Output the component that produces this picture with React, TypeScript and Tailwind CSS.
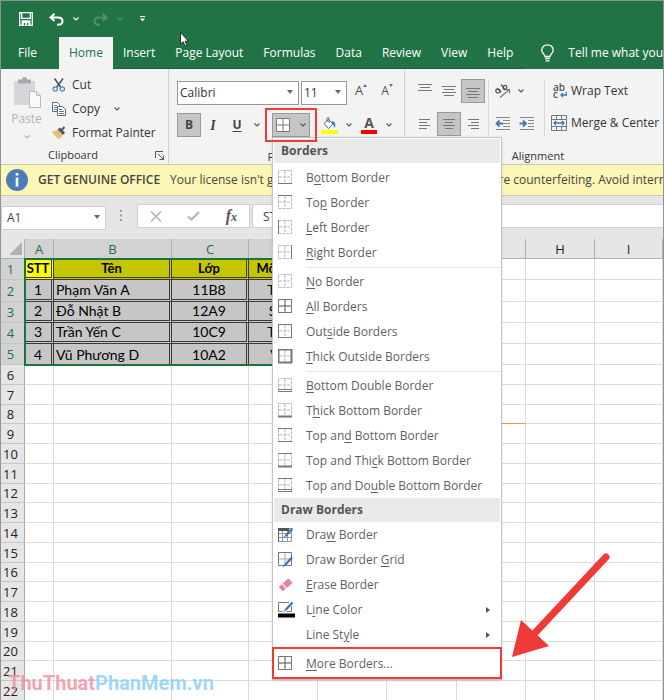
import React from "react";

const UI = "font-['Open_Sans','Noto_Sans',sans-serif]";

/* ---------- small shared pieces ---------- */

function Chevron({ className = "text-[#555]" }: { className?: string }) {
  return (
    <svg width="6" height="4" viewBox="0 0 6 4" fill="none" stroke="currentColor" strokeWidth="1.1" className={className}>
      <path d="M0.5 0.5 3 3 5.5 0.5" />
    </svg>
  );
}

function DropArrow() {
  return (
    <svg width="6" height="4" viewBox="0 0 6 4" className="pointer-events-none absolute top-1/2 right-1.5 -mt-0.5 fill-[#666]">
      <path d="M0 0h6L3 4z" />
    </svg>
  );
}

function IconButton({
  label,
  on = false,
  width = "w-6",
  disabled = false,
  children,
}: {
  label: string;
  on?: boolean;
  width?: string;
  disabled?: boolean;
  children: React.ReactNode;
}) {
  return (
    <button
      type="button"
      aria-label={label}
      disabled={disabled}
      className={`flex h-6 shrink-0 items-center justify-center ${width} ${on ? "border border-[#999] bg-[#c5c5c5]" : ""}`}
    >
      {children}
    </button>
  );
}

/* ---------- title bar and tabs ---------- */

function TitleBar() {
  return (
    <div className="flex h-9 items-center bg-[#217346] pl-[18px] text-white">
      <button type="button" aria-label="Save" className="mr-4">
        <svg width="14" height="14" viewBox="0 0 14 14" fill="none" stroke="currentColor" strokeWidth="1.3">
          <path d="M.7.7h12.6v12.6H.7zM2.7.9v5.4h8.6V.9" />
          <path d="M3.2 13V9h7.6v4z" fill="currentColor" />
          <path d="M5.5 13.4V11M8.6 13.4V11" stroke="#217346" />
        </svg>
      </button>
      <button type="button" aria-label="Undo" className="mr-[9px]">
        <svg width="15" height="13" viewBox="0 0 15 13" fill="none" stroke="currentColor" strokeWidth="2">
          <path d="M5.5.7 1.5 4.4l4 3.7M2 4.4h7.2c2.700 0 4.300 1.500 4.300 3.600s-1.600 3.800-4.200 3.800H8" />
        </svg>
      </button>
      <button type="button" aria-label="Undo history" className="mr-3.5">
        <Chevron className="text-white" />
      </button>
      <button type="button" aria-label="Redo" disabled className="mr-[9px] text-[#4f9069]">
        <svg width="15" height="13" viewBox="0 0 15 13" fill="none" stroke="currentColor" strokeWidth="2">
          <path d="M9.500.7l4 3.700-4 3.700M13 4.400H5.800c-2.700 0-4.300 1.500-4.300 3.600s1.600 3.800 4.200 3.800H7" />
        </svg>
      </button>
      <button type="button" aria-label="Redo history" disabled className="mr-[17px]">
        <Chevron className="text-[#4f9069]" />
      </button>
      <button type="button" aria-label="Customize Quick Access Toolbar">
        <svg width="5" height="6" viewBox="0 0 5 6" fill="currentColor">
          <path d="M0 0h5v1H0zM0 2.500h5L2.500 5.500z" />
        </svg>
      </button>
    </div>
  );
}

const TABS = ["Home", "Insert", "Page Layout", "Formulas", "Data", "Review", "View", "Help"];

function Tabs() {
  return (
    <nav className="flex h-8 overflow-hidden bg-[#217346] pl-[7px] text-[12px] whitespace-nowrap text-white">
      <button type="button" className="mr-3 px-2.5">
        File
      </button>
      {TABS.map((t) => (
        <button
          key={t}
          type="button"
          className={`px-2.5 ${t === "Home" ? "bg-[#f3f3f3] text-[#217346]" : "border-b border-[#1a5c38]"}`}
        >
          {t}
        </button>
      ))}
      <button type="button" className="ml-[18px] flex items-center gap-3.5">
        <svg width="13" height="18" viewBox="0 0 13 18" fill="none" stroke="currentColor" strokeWidth="1.3">
          <path d="M4 12.500c0-2-3.200-3.200-3.200-6.400C.8 3 3.300.8 6.500.8s5.700 2.200 5.700 5.300c0 3.200-3.200 4.400-3.200 6.400zM4 14.500h5M4.500 16.800h4" />
        </svg>
        Tell me what you want to do
      </button>
    </nav>
  );
}

/* ---------- ribbon ---------- */

function Launcher() {
  return (
    <button type="button" aria-label="More settings" className="text-[#555]">
      <svg width="9" height="9" viewBox="0 0 9 9" fill="none" stroke="currentColor">
        <path d="M.5 7V.5H8M3 3l5 5M8.500 4.500v4h-4" />
      </svg>
    </button>
  );
}

function Clipboard() {
  const row = "flex h-6 items-center text-[12px] whitespace-nowrap";
  return (
    <section className="flex w-[168px] shrink-0 flex-col border-r border-[#d0d0d0] pt-1">
      <div className="flex">
        <button type="button" disabled className="flex w-[51px] flex-col items-center pt-1 text-[12px] text-[#b2b2b2]">
          <svg width="30" height="32" viewBox="0 0 30 32" fill="none">
            <path d="M2 4h21v24H2z" fill="#d8d5da" />
            <path d="M6 2.500h4a2.500 2.500 0 0 1 5 0h4V6.500H6z" fill="#a9a9ab" />
            <path d="M17.500 14.500h7l4 4v12h-11z" fill="#faf8fb" stroke="#bdb9bf" />
            <path d="M24.500 14.500v4h4" stroke="#bdb9bf" />
          </svg>
          <span className="mt-0.5 leading-4">Paste</span>
          <Chevron className="mt-2 text-[#b2b2b2]" />
        </button>
        <div className="flex flex-col">
          <button type="button" className={row}>
            <svg width="14" height="14" viewBox="0 0 14 14" fill="none" className="mr-[6px]">
              <path d="M2.500.5 9 9.500M11 .5 4.500 9.500" stroke="#555" strokeWidth="1.600" />
              <circle cx="3.200" cy="11" r="2.200" stroke="#4a86c0" strokeWidth="1.200" />
              <circle cx="10.300" cy="11" r="2.200" stroke="#4a86c0" strokeWidth="1.200" />
            </svg>
            Cut
          </button>
          <button type="button" className={row}>
            <svg width="14" height="14" viewBox="0 0 14 14" fill="none" stroke="#666" className="mr-[6px]">
              <path d="M.5.5h5l2 2v7h-7z" fill="#fff" />
              <path d="M2 3.500h3M2 5.500h3M2 7.500h3" stroke="#4a86c0" />
              <path d="M5.500 4.500h5l3 3v6h-8z" fill="#fff" />
              <path d="M7 7.500h3M7 9.500h5M7 11.500h5" stroke="#4a86c0" />
            </svg>
            Copy
            <Chevron className="ml-3.5 text-[#555]" />
          </button>
          <button type="button" className={row}>
            <svg width="14" height="14" viewBox="0 0 14 14" className="mr-[6px]">
              <path d="M0 5.500 6 4l5 5-3.500 4.500C5 12.500 1.500 9 0 5.500z" fill="#eabf7d" />
              <path d="M5.500 3.500 8 1.500l5 5-2 2.500z" fill="#5a5a5a" />
              <path d="M9.500 4 12.500 1" stroke="#5a5a5a" strokeWidth="2.200" />
            </svg>
            Format Painter
          </button>
        </div>
      </div>
      <div className="mt-0.5 flex h-4 items-center pr-1">
        <span className="flex-1 pr-4 pl-1.5 text-center text-[11px]">Clipboard</span>
        <Launcher />
      </div>
    </section>
  );
}

type Edges = { t?: number; b?: number; l?: number; r?: number; inner?: boolean; double?: boolean };

function BorderIcon({ t = 0, b = 0, l = 0, r = 0, inner = false, double = false }: Edges) {
  return (
    <svg width="15" height="15" viewBox="0 0 15 15" fill="none" stroke="#777">
      <path d="M.5.500h13v13H.5zM7 1v12M1 7h12" stroke="#b8b8b8" strokeDasharray="3 1" />
      {inner && <path d="M7 1v12M1 7h12" stroke="#666" />}
      {t > 0 && <path d="M0 .5h14" strokeWidth={t} />}
      {b > 0 && <path d="M0 13.500h14" strokeWidth={b} />}
      {l > 0 && <path d="M.5 0v14" strokeWidth={l} />}
      {r > 0 && <path d="M13.500 0v14" strokeWidth={r} />}
      {double && <path d="M0 11.500h14" />}
    </svg>
  );
}

const ALL: Edges = { t: 1, b: 1, l: 1, r: 1, inner: true };

/* An asterisk stands before the access key of each label. */
const GROUPS: { label: string; edges: Edges }[][] = [
  [
    { label: "B*ottom Border", edges: { b: 1 } },
    { label: "To*p Border", edges: { t: 1 } },
    { label: "*Left Border", edges: { l: 1 } },
    { label: "*Right Border", edges: { r: 1 } },
  ],
  [
    { label: "*No Border", edges: {} },
    { label: "*All Borders", edges: ALL },
    { label: "Out*side Borders", edges: { t: 1, b: 1, l: 1, r: 1 } },
    { label: "*Thick Outside Borders", edges: { t: 2, b: 2, l: 2, r: 2 } },
  ],
  [
    { label: "*Bottom Double Border", edges: { b: 1, double: true } },
    { label: "T*hick Bottom Border", edges: { b: 2 } },
    { label: "Top an*d Bottom Border", edges: { t: 1, b: 1 } },
    { label: "Top and Thi*ck Bottom Border", edges: { t: 1, b: 2 } },
    { label: "Top and Do*uble Bottom Border", edges: { t: 1, b: 1, double: true } },
  ],
];

function MenuItem({ label, icon, submenu = false }: { label: string; icon?: React.ReactNode; submenu?: boolean }) {
  const [before, rest] = label.split("*");
  return (
    <button type="button" role="menuitem" className="flex h-[25px] w-full items-center pl-1 text-left whitespace-nowrap">
      <span className="flex w-7 shrink-0">{icon}</span>
      <span className="flex-1">
        {before}
        <u className="underline-offset-2">{rest[0]}</u>
        {rest.slice(1)}
      </span>
      {submenu && (
        <svg width="4" height="6" viewBox="0 0 4 6" className="mr-[10px] fill-[#555]">
          <path d="M0 0v6l4-3z" />
        </svg>
      )}
    </button>
  );
}

function MenuTitle({ children }: { children: React.ReactNode }) {
  return <div className="flex h-6 items-center bg-[#eaeaea] pl-[7px] font-bold text-[#555]">{children}</div>;
}

function Pencil() {
  return (
    <>
      <path d="M14.500 1.500 7.500 9" stroke="#3d78b8" strokeWidth="2.400" />
      <path d="M5 11.500 7.800 9.800 6.800 8.700z" fill="#3d78b8" stroke="none" />
    </>
  );
}

function BordersMenu() {
  return (
    <div
      role="menu"
      className="absolute top-full left-[7px] z-10 w-[230px] border border-[#c4c4c4] bg-white pt-px text-[12px] text-[#5f5f5f] shadow-sm"
    >
      <div className="px-px">
        <MenuTitle>Borders</MenuTitle>
        <div className="pt-0.5">
          {GROUPS.map((items, i) => (
            <div key={i}>
              {i > 0 && <hr className="mt-0.5 mb-px ml-8 border-[#e2e2e2]" />}
              {items.map((it) => (
                <MenuItem key={it.label} label={it.label} icon={<BorderIcon {...it.edges} />} />
              ))}
            </div>
          ))}
        </div>
        <MenuTitle>Draw Borders</MenuTitle>
        <MenuItem
          label="Dra*w Border"
          icon={
            <svg width="17" height="16" viewBox="0 0 17 16" fill="none" stroke="#999">
              <path d="M.5 1.500h13v13H.5zM.5 6.500h13M.5 10.500h13M4.500 2v12M9.500 2v12" />
              <path d="M0 2.500h11" stroke="#555" strokeWidth="3" />
              <path d="M.5 2v13" stroke="#666" />
              <Pencil />
            </svg>
          }
        />
        <MenuItem
          label="Draw Border *Grid"
          icon={
            <svg width="17" height="16" viewBox="0 0 17 16" fill="none" stroke="#777">
              <path d="M.5.500h13v13H.5z" />
              <path d="M7 1v12M1 7h12" stroke="#aaa" />
              <path d="M14 5.500 7 13" stroke="#3d78b8" strokeWidth="2.400" />
              <path d="M4.500 15.500 7.500 13.800 6.300 12.500z" fill="#3d78b8" stroke="none" />
            </svg>
          }
        />
        <MenuItem
          label="*Erase Border"
          icon={
            <svg width="15" height="14" viewBox="0 0 15 14" fill="#e58496">
              <path d="M9.500 1h1.500L14 4v1.500L8.500 10 4.800 5.500zM4 6.200 7.700 10.700 5.500 12.700H4L1.200 9.500V8.200z" />
            </svg>
          }
        />
        <MenuItem
          label="L*ine Color"
          icon={
            <svg width="17" height="17" viewBox="0 0 17 17" fill="none" stroke="#777">
              <path d="M11 1.500H.5v9h4M13.500 5v5.500H9" />
              <Pencil />
              <path d="M0 12.500h17v4H0z" fill="#000" stroke="none" />
            </svg>
          }
          submenu
        />
        <MenuItem label="Line St*yle" submenu />
      </div>
      <div className="-mx-px border-2 border-[#f03a38] pt-0.5 pb-px">
        <MenuItem label="*More Borders..." icon={<BorderIcon {...ALL} />} />
      </div>
    </div>
  );
}

function FontGroup() {
  return (
    <section className="flex w-[236px] shrink-0 flex-col border-r border-[#d0d0d0] pt-2.5 pl-2">
      <div className="flex gap-0.5">
        <div className="relative w-[122px]">
          <select aria-label="Font" className="h-6 w-full appearance-none border border-[#999] bg-white pl-0.5 text-[12px]">
            <option>Calibri</option>
          </select>
          <DropArrow />
        </div>
        <div className="relative w-[46px]">
          <select aria-label="Font size" className="h-6 w-full appearance-none border border-[#999] bg-white pl-0.5 text-[12px]">
            <option>11</option>
          </select>
          <DropArrow />
        </div>
        <IconButton label="Increase font size">
          <span className="text-[13px] text-[#555]">A</span>
          <svg width="4" height="3" viewBox="0 0 4 3" className="mb-3 fill-[#3d78b8]">
            <path d="M0 3h4L2 0z" />
          </svg>
        </IconButton>
        <IconButton label="Decrease font size">
          <span className="text-[12px] text-[#555]">A</span>
          <svg width="4" height="3" viewBox="0 0 4 3" className="mb-3 fill-[#3d78b8]">
            <path d="M0 0h4L2 3z" />
          </svg>
        </IconButton>
      </div>
      <div className="mt-2 flex">
        <IconButton label="Bold" on>
          <b className="text-[12px] text-[#444]">B</b>
        </IconButton>
        <IconButton label="Italic">
          <b className="font-['Liberation_Serif',serif] text-[14px] text-[#444] italic">I</b>
        </IconButton>
        <IconButton label="Underline">
          <b className="text-[12px] text-[#444] underline underline-offset-2">U</b>
        </IconButton>
        <IconButton label="Underline options" width="w-4">
          <Chevron />
        </IconButton>
        <div className="relative px-[7px]">
          <button
            type="button"
            aria-label="Borders"
            aria-expanded="true"
            className="flex h-6 w-[38px] items-center gap-2.5 border border-[#999] bg-[#c5c5c5] pl-[3px]"
          >
            <svg width="14" height="14" viewBox="0 0 14 14" fill="#fff" stroke="#777">
              <path d="M.5.500h13v13H.5zM7 1v12M1 7h12" />
            </svg>
            <Chevron />
          </button>
          <BordersMenu />
          <div className="pointer-events-none absolute inset-x-0 -inset-y-[5px] z-20 border-2 border-[#f03a38]" />
        </div>
        <IconButton label="Fill Color">
          <svg width="17" height="17" viewBox="0 0 17 17" fill="none">
            <path d="M3 6.500 7.500 2.500 12 7 7.500 11.500z" fill="#fff" stroke="#666" />
            <path d="M6 5V1.500c0-1.300 2-1.300 2 0V6" stroke="#666" />
            <path d="M10.500 4c3 0 4.500 2 3.500 7-1-1.500-1.500-3-2-4z" fill="#3d78b8" />
            <path d="M0 13h17v4H0z" fill="#ff0" />
          </svg>
        </IconButton>
        <IconButton label="Fill colors" width="w-4">
          <Chevron />
        </IconButton>
        <IconButton label="Font Color">
          <span className="w-4 border-b-4 border-[#f00] text-center text-[14px] leading-[14px] font-bold text-[#555]">A</span>
        </IconButton>
        <IconButton label="Font colors" width="w-4">
          <Chevron />
        </IconButton>
      </div>
      <div className="mt-3 flex h-4 items-center pr-1">
        <span className="flex-1 pr-2.5 text-center text-[11px]">Font</span>
        <Launcher />
      </div>
    </section>
  );
}

function Lines({ d, height = 12 }: { d: string; height?: number }) {
  return (
    <svg width="16" height={height} viewBox={`0 0 16 ${height}`} stroke="#777">
      <path d={d} />
    </svg>
  );
}

function Rule() {
  return <div className="mr-0.5 ml-[3px] h-[57px] w-px shrink-0 bg-[#d8d8d8]" />;
}

function Alignment() {
  return (
    <section className="flex min-w-0 flex-1 flex-col overflow-hidden pt-2.5 pl-2">
      <div className="flex">
        <div className="grid shrink-0 grid-cols-[24px_24px_24px] gap-y-2">
          <IconButton label="Top Align">
            <span className="mb-2">
              <Lines d="M1 .5h14M3 3.500h10M1 6.500h14" height={7} />
            </span>
          </IconButton>
          <IconButton label="Middle Align">
            <Lines d="M1 1.500h14M3 4.500h10M1 7.500h14M3 10.500h10" />
          </IconButton>
          <IconButton label="Bottom Align" on>
            <span className="mt-1">
              <Lines d="M1 1.500h14M3 4.500h10M1 7.500h14M3 10.500h10" />
            </span>
          </IconButton>
          <IconButton label="Align Left">
            <Lines d="M2 1.500h11M2 4.500h8M2 7.500h11M2 10.500h8" />
          </IconButton>
          <IconButton label="Center" on>
            <Lines d="M2 1.500h12M4 4.500h8M2 7.500h12M4 10.500h8" />
          </IconButton>
          <IconButton label="Align Right">
            <Lines d="M3 1.500h11M6 4.500h8M3 7.500h11M6 10.500h8" />
          </IconButton>
        </div>
        <Rule />
        <div className="grid shrink-0 grid-cols-[24px_24px] gap-y-2">
          <IconButton label="Orientation">
            <svg width="18" height="16" viewBox="0 0 18 16" fill="none" stroke="#555" strokeWidth="1.2">
              <ellipse cx="4" cy="8" rx="2.200" ry="1.800" />
              <path d="M3 5.200 7.200 9M7 1.500l4.500 5.500" />
              <ellipse cx="11" cy="4.500" rx="1.800" ry="2.200" />
              <path d="M6 14.500 15.500 6.500M11.500 6.500h4V10.500" stroke="#777" />
            </svg>
          </IconButton>
          <IconButton label="Orientation options" width="w-3">
            <Chevron />
          </IconButton>
          <IconButton label="Decrease Indent">
            <svg width="16" height="14" viewBox="0 0 16 14" fill="none" stroke="#888">
              <path d="M1 .5h14M8 3.500h7M8 6.500h7M8 9.500h7M1 12.500h14" />
              <path d="M4.500 3.500 1.500 6.500l3 3M1.500 6.500H8" stroke="#3d78b8" strokeWidth="1.800" />
            </svg>
          </IconButton>
          <IconButton label="Increase Indent">
            <svg width="16" height="14" viewBox="0 0 16 14" fill="none" stroke="#888">
              <path d="M1 .5h14M9 3.500h6M9 6.500h6M9 9.500h6M1 12.500h14" />
              <path d="M4 3.500 7 6.500l-3 3M7 6.500H.5" stroke="#3d78b8" strokeWidth="1.800" />
            </svg>
          </IconButton>
        </div>
        <div className="ml-0.5 flex">
          <Rule />
        </div>
        <div className="ml-1 flex flex-col gap-2 text-[12px] whitespace-nowrap">
          <button type="button" className="flex h-6 items-center gap-1">
            <span className="relative w-4 pl-0.5 text-left text-[10px] leading-[7px] font-semibold text-[#555]">
              ab
              <br />c
              <svg width="7" height="6" viewBox="0 0 7 6" fill="none" stroke="#3d78b8" strokeWidth="1.300" className="absolute right-0 bottom-0">
                <path d="M6.300 0v3H1M3 1 1 3l2 2" />
              </svg>
            </span>
            Wrap Text
          </button>
          <button type="button" className="flex h-6 items-center gap-1">
            <svg width="16" height="16" viewBox="0 0 16 16" fill="none" stroke="#777">
              <path d="M.5.500h15v15H.5zM.5 4.500h15M.5 11.500h15M5.500.5v4M10.500.5v4M5.500 11.500v4M10.500 11.500v4" />
              <path d="M3 8h10M5 6 3 8l2 2M11 6l2 2-2 2" stroke="#3d78b8" strokeWidth="1.300" />
            </svg>
            Merge &amp; Center
          </button>
        </div>
      </div>
      <div className="mt-3 flex h-4 items-center justify-center">
        <span className="text-[11px]">Alignment</span>
      </div>
    </section>
  );
}

/* ---------- bars above the sheet ---------- */

function MessageBar() {
  return (
    <div className="flex h-8 items-center overflow-hidden border-y border-[#cccc99] bg-[#fcf7b6] pl-[5px] text-[12px] whitespace-nowrap text-[#444]">
      <svg width="22" height="22" viewBox="0 0 22 22" className="mr-[10px] shrink-0">
        <circle cx="11" cy="11" r="11" fill="#4a7ebb" />
        <path d="M11 4v2.500M11 8.500v9" stroke="#fff" strokeWidth="2.600" />
      </svg>
      <b className="mr-2.5 font-semibold">GET GENUINE OFFICE</b>
      <span>
        Your license isn't genuine, and you may be victim of software counterfeiting. Avoid interruption and keep your files safe.
      </span>
    </div>
  );
}

function FormulaBar() {
  return (
    <div className="flex h-[43px] items-start bg-[#e6e6e6] pt-2">
      <div className="relative w-[105px] shrink-0">
        <input aria-label="Name Box" defaultValue="A1" className="h-6 w-full border border-[#cfcfcf] bg-white pl-[5px] text-[12px] text-[#444]" />
        <DropArrow />
      </div>
      <svg width="3" height="12" viewBox="0 0 3 12" className="mt-1.5 mr-3.5 ml-3.5 shrink-0 fill-[#999]">
        <path d="M0 0h2v2H0zM0 4.500h2v2H0zM0 9h2v2H0z" />
      </svg>
      <div className="flex h-6 w-[113px] shrink-0 items-center justify-between border border-[#cfcfcf] bg-white px-3">
        <button type="button" aria-label="Cancel" disabled>
          <svg width="12" height="11" viewBox="0 0 12 11" stroke="#b5b5b5" strokeWidth="1.600">
            <path d="M1 .5l10 10M11 .5l-10 10" />
          </svg>
        </button>
        <button type="button" aria-label="Enter" disabled>
          <svg width="13" height="10" viewBox="0 0 13 10" fill="none" stroke="#b5b5b5" strokeWidth="2.200">
            <path d="M1 5.500 4.500 8.500 12 1" />
          </svg>
        </button>
        <button
          type="button"
          aria-label="Insert Function"
          className="font-['Liberation_Serif',serif] text-[16px] leading-5 font-bold text-[#555] italic"
        >
          f<span className="text-[12px]">x</span>
        </button>
      </div>
      <input
        aria-label="Formula"
        defaultValue="STT"
        className="ml-0.5 h-6 min-w-0 flex-1 border border-r-0 border-[#cfcfcf] bg-white pl-2.5 text-[12px] text-[#444]"
      />
    </div>
  );
}

/* ---------- sheet ---------- */

const COLUMNS = ["A", "B", "C", "D", "E", "F", "G", "H", "I"];
const DATA = [
  ["STT", "Tên", "Lớp", "Môn học"],
  ["1", "Phạm Văn A", "11B8", "Toán"],
  ["2", "Đỗ Nhật B", "12A9", "Sinh"],
  ["3", "Trần Yến C", "10C9", "Toán"],
  ["4", "Vũ Phương D", "10A2", "Văn"],
];

function cellClass(r: number, c: number) {
  if (r < 5 && c < 4) {
    const fill =
      r > 0 ? "bg-[#c6c6c6] text-[14px]" : c === 0 ? "bg-[#ffff00] text-[13px] font-bold" : "bg-[#c6c600] text-[13px] font-bold";
    const align = r > 0 && c === 1 ? "text-left pl-0.5" : "text-center";
    const edge = r === 4 ? "border-r-3 border-double border-[#3a3a3a]" : "border-r-3 border-b-3 border-double border-[#3a3a3a]";
    return `${fill} ${align} ${edge}`;
  }
  if (r === 7 && c === 6) return "border-r border-b border-r-[#dcdcdc] border-b-[#f28c4a]";
  return "border-r border-b border-[#dcdcdc]";
}

function rowHeight(r: number) {
  if (r < 5) return r === 1 ? "h-[22px]" : "h-[21px]";
  return r % 4 === 3 ? "h-[19px]" : "h-5";
}

function Sheet() {
  return (
    <div className="relative overflow-hidden">
      <table className="w-full table-fixed border-separate border-spacing-0 bg-white text-black">
        <colgroup>
          <col className="w-6" />
          <col className="w-[29px]" />
          <col className="w-[118px]" />
          <col className="w-[77px]" />
          <col className="w-[69px]" />
          <col className="w-[69px]" />
          <col className="w-[70px]" />
          <col className="w-[69px]" />
          <col className="w-[69px]" />
          <col />
        </colgroup>
        <thead>
          <tr className="h-5 text-[13px] leading-4">
            <th aria-label="Select all" className="border-r border-b border-[#b0b0b0] bg-[#e6e6e6] p-0">
              <svg width="13" height="13" viewBox="0 0 13 13" className="ml-auto mr-0.5 fill-[#b2b2b2]">
                <path d="M13 0v13H0z" />
              </svg>
            </th>
            {COLUMNS.map((c, i) => (
              <th
                key={c}
                scope="col"
                className={`border-r border-b border-[#b0b0b0] p-0 font-normal ${i < 4 ? "bg-[#d2d2d2] text-[#217346]" : "bg-[#e6e6e6] text-[#222]"}`}
              >
                {c}
              </th>
            ))}
          </tr>
        </thead>
        <tbody>
          {Array.from({ length: 22 }, (_, r) => (
            <tr key={r} className={rowHeight(r)}>
              <th
                scope="row"
                className={`border-r border-b border-r-[#a8a8a8] border-b-[#c6c6c6] p-0 pr-1 text-[13px] leading-4 font-normal ${r < 5 ? "bg-[#d2d2d2] text-[#217346]" : "bg-[#e6e6e6] text-[#222]"}`}
              >
                {r + 1}
              </th>
              {COLUMNS.map((c, i) => (
                <td
                  key={c}
                  className={`overflow-hidden p-0 font-[Lato,'Open_Sans',sans-serif] leading-4 whitespace-nowrap ${cellClass(r, i)}`}
                >
                  {DATA[r]?.[i]}
                </td>
              ))}
            </tr>
          ))}
        </tbody>
      </table>
      <div className="pointer-events-none absolute top-[19px] left-[23px] h-[108px] w-[295px] border-2 border-[#1a7343]" />
    </div>
  );
}

/* ---------- overlays ---------- */

function Overlays() {
  return (
    <>
      <svg width="9" height="15" viewBox="0 0 9 15" className="absolute top-[31px] left-[179px] z-30">
        <path d="M.5.500v11.500L3.200 9.700l2 4.500 1.800-.8L5 9.200h3.500z" fill="#fff" stroke="#111" strokeWidth=".8" />
      </svg>
      <svg width="100" height="110" viewBox="0 0 100 110" className="absolute top-[549px] left-[509px] z-30">
        <path d="M96 7 24 84" stroke="#f03a38" strokeWidth="7" strokeLinecap="round" />
        <path d="M2 107 11 70 39 96z" fill="#f03a38" />
      </svg>
      <div className="pointer-events-none absolute bottom-1.5 left-[7px] z-30 font-[Roboto,sans-serif] text-[20px] leading-6 font-bold">
        <span className="text-[#f5899d]/80">ThuThuat</span>
        <span className="text-[#86cdf7]/80">PhanMem.vn</span>
      </div>
    </>
  );
}

export default function App() {
  return (
    <div className={`relative overflow-hidden border border-[#929292] bg-white text-[#333] ${UI}`}>
      <TitleBar />
      <Tabs />
      <div className="flex h-[95px] bg-[#f3f3f3]">
        <Clipboard />
        <FontGroup />
        <Alignment />
      </div>
      <MessageBar />
      <FormulaBar />
      <Sheet />
      <Overlays />
    </div>
  );
}
